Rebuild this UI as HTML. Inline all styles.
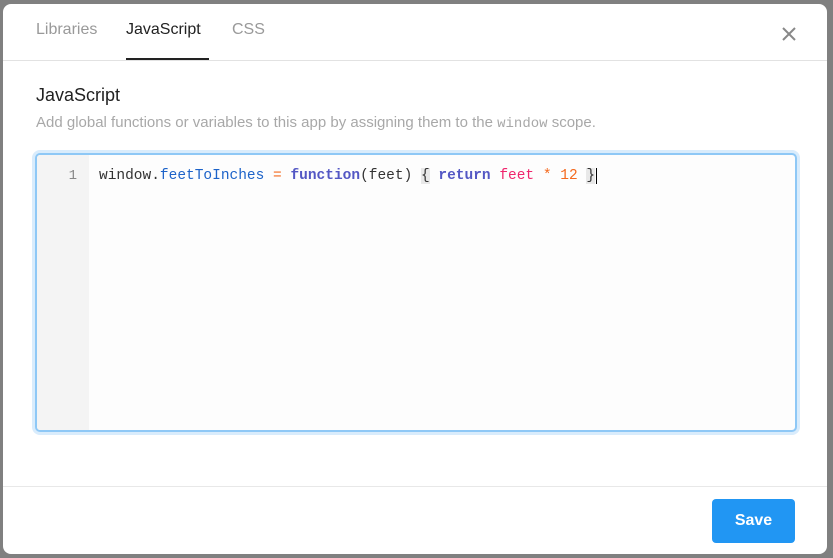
<!DOCTYPE html>
<html><head><style>
*{box-sizing:border-box;margin:0;padding:0}
body{width:833px;height:558px;background:#808080;position:relative;overflow:hidden;font-family:"Liberation Sans",sans-serif}
.modal{position:absolute;left:3px;top:4px;width:824px;height:550px;background:#fff;border-radius:8px;overflow:hidden}
.tab{position:absolute;top:17px;font-size:16px;color:#999}
.hdr{position:absolute;left:0;right:0;top:56px;border-bottom:1px solid #e2e2e2}
.ul{position:absolute;left:123px;top:54px;width:83px;height:2px;background:#222}
.x{position:absolute;left:778px;top:22px}
h2{position:absolute;left:33px;top:81px;font-size:18px;font-weight:normal;color:#222}
.desc{position:absolute;left:33px;top:110px;font-size:15px;color:#a8a8a8}
.ed{position:absolute;left:32px;top:149px;width:762px;height:279px;border:2px solid #8ec8f6;border-radius:5px;box-shadow:0 0 0 3px #d9ecfc;background:#fdfdfd;overflow:hidden}
.gut{position:absolute;left:0;top:0;bottom:0;width:52px;background:#f4f4f4;color:#888;font:14px "Liberation Mono",monospace;text-align:right;padding:13px 12px 0 0}
.code{position:absolute;left:62px;top:13px;font:14.5px "Liberation Mono",monospace;color:#333;white-space:pre}
.b{background:#e8e8e8}
.ft{position:absolute;left:0;right:0;top:482px;border-top:1px solid #e8e8e8}
.save{position:absolute;left:709px;top:495px;width:83px;height:44px;background:#2196f3;border-radius:4px;color:#fff;font-weight:bold;font-size:16px;text-align:center;line-height:44px}
</style></head><body>
<div class="modal">
<div class="tab" style="left:33px">Libraries</div>
<div class="tab" style="left:123px;color:#222">JavaScript</div>
<div class="tab" style="left:229px">CSS</div>
<div class="hdr"></div><div class="ul"></div>
<svg class="x" width="16" height="16" viewBox="0 0 16 16"><path d="M2 2L14 14M14 2L2 14" stroke="#888" stroke-width="2"/></svg>
<h2>JavaScript</h2>
<div class="desc">Add global functions or variables to this app by assigning them to the <span style="font-family:'Liberation Mono',monospace;font-size:14px">window</span> scope.</div>
<div class="ed"><div class="gut">1</div>
<div class="code">window.<span style="color:#1d63c9">feetToInches</span> <span style="color:#f46a1e">=</span> <b style="color:#5357c4">function</b>(feet) <span class="b">{</span> <b style="color:#5357c4">return</b> <span style="color:#f0246c">feet</span> <span style="color:#f46a1e">*</span> <span style="color:#f46a1e">12</span> <span class="b">}</span><span style="border-left:1px solid #000;margin-left:1px"></span></div></div>
<div class="ft"></div>
<div class="save">Save</div>
</div>
</body></html>
